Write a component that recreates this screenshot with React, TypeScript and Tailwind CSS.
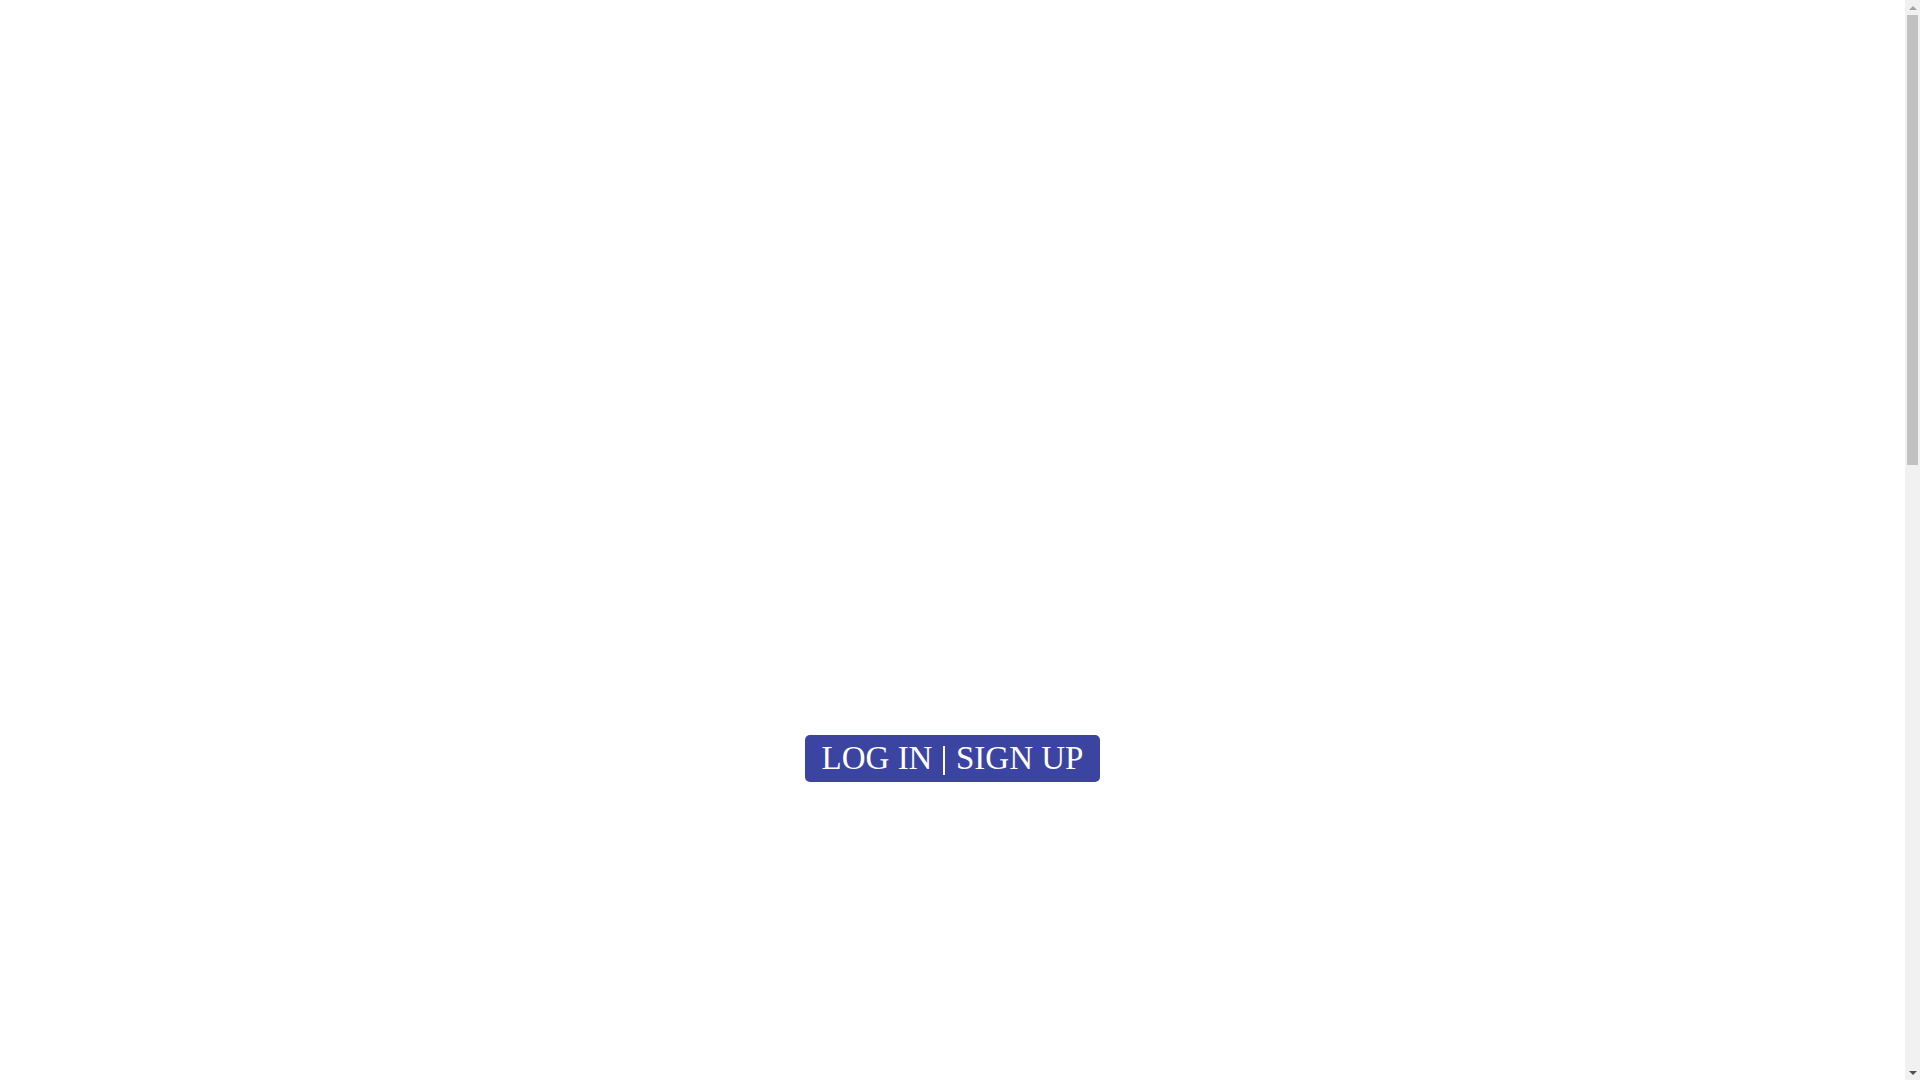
export default function App() {
  return (
    <div
      className="flex h-screen overflow-hidden bg-white"
      style={{ fontFamily: '"Liberation Serif", "Times New Roman", serif' }}
    >
      {/* Landing hero, auth entry */}
      <main className="flex flex-1 justify-center pt-[735px]">
        <a
          href="#"
          className="flex h-[47px] items-center self-start rounded-[5px] bg-[#3c44a1] px-[17px] text-[33px] leading-none text-white"
        >
          <span>LOG IN</span>
          <span className="mx-[11px] h-[29px] w-[1.5px] translate-y-[2px] bg-white" />
          <span>SIGN UP</span>
        </a>
      </main>

      {/* Page scrollbar */}
      <div className="flex w-[15px] flex-col items-center bg-[#f1f1f1]">
        <div className="flex h-[15px] items-center justify-center">
          <div className="h-0 w-0 border-x-[4px] border-b-[4px] border-x-transparent border-b-[#a3a3a3]" />
        </div>
        <div className="h-[450px] w-[11px] bg-[#c1c1c1]" />
        <div className="flex-1" />
        <div className="flex h-[15px] items-center justify-center">
          <div className="h-0 w-0 border-x-[4px] border-t-[4px] border-x-transparent border-t-[#505050]" />
        </div>
      </div>
    </div>
  );
}
